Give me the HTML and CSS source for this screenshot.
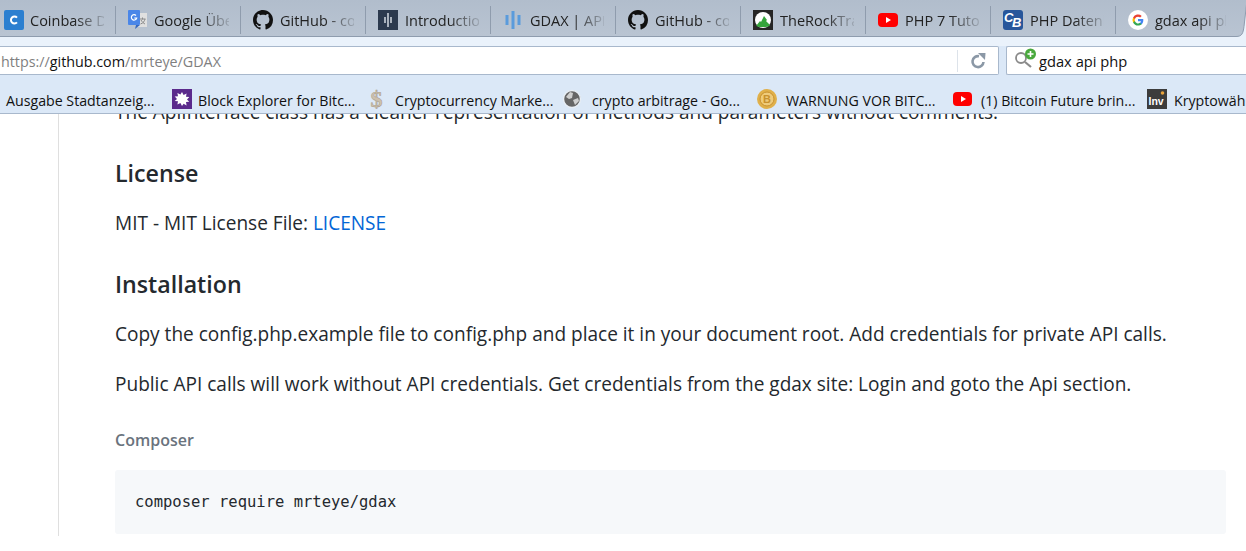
FILE: index.html
```html
<!DOCTYPE html>
<html lang="de">
<head>
<meta charset="utf-8">
<title>GDAX</title>
<link rel="stylesheet" href="styles.css">
</head>
<body>
<header class="chrome">
  <div class="tabs">
    <div class="tab first"><svg class="ic" viewBox="0 0 20 20"><rect width="20" height="20" rx="2" fill="#2b7fd0"/><path d="M13 7.600A3.500 3.500 0 1 0 13 12.400" fill="none" stroke="#fff" stroke-width="2"/></svg><span class="tt">Coinbase Dashboard</span></div>
    <div class="tab t-gt"><svg class="ic" viewBox="0 0 20 20"><rect x="8" y="3" width="11" height="14" fill="#e0e0e0"/><rect width="12" height="15" rx="1" fill="#4a86e8"/><path d="M8 15l-1 4 5-4z" fill="#3367c0"/><path d="M11.500 9h6M14.500 7.500v2M12.500 14c3-1 4-3 4.500-5M13 10c1 2 3 3.500 4 4" stroke="#8a8a8a" fill="none"/><path d="M8 5.500A2.700 2.700 0 1 0 8.700 8H6.200" fill="none" stroke="#fff" stroke-width="1.200"/></svg><span class="tt">Google Übersetzer</span></div>
    <div class="tab"><svg class="ic" viewBox="0 0 16 16"><path fill="#111" d="M8 0C3.58 0 0 3.58 0 8c0 3.54 2.29 6.53 5.47 7.59.4.07.55-.17.55-.38 0-.19-.01-.82-.01-1.49-2.01.37-2.53-.49-2.69-.94-.09-.23-.48-.94-.82-1.13-.28-.15-.68-.52-.01-.53.63-.01 1.08.58 1.23.82.72 1.21 1.87.87 2.33.66.07-.52.28-.87.51-1.07-1.78-.2-3.64-.89-3.64-3.95 0-.87.31-1.59.82-2.15-.08-.2-.36-1.02.08-2.12 0 0 .67-.21 2.2.82.64-.18 1.32-.27 2-.27s1.36.09 2 .27c1.53-1.04 2.2-.82 2.2-.82.44 1.1.16 1.92.08 2.12.51.56.82 1.27.82 2.15 0 3.07-1.87 3.75-3.65 3.95.29.25.54.73.54 1.48 0 1.07-.01 1.93-.01 2.2 0 .21.15.46.55.38A8 8 0 0 0 16 8c0-4.42-3.58-8-8-8z"/></svg><span class="tt">GitHub - coinbase</span></div>
    <div class="tab"><svg class="ic" viewBox="0 0 20 20"><rect width="20" height="20" fill="#2c3a4e"/><path d="M7 7v6M10 3v14M13 7v6" stroke="#dfe5ec" stroke-width="1.400"/></svg><span class="tt">Introduction</span></div>
    <div class="tab"><svg class="ic" viewBox="0 0 20 20"><path d="M4 5v10M10 1v18M16 5v10" stroke="#5a9bdc" stroke-width="3"/></svg><span class="tt">GDAX | API Reference</span></div>
    <div class="tab"><svg class="ic" viewBox="0 0 16 16"><path fill="#111" d="M8 0C3.58 0 0 3.58 0 8c0 3.54 2.29 6.53 5.47 7.59.4.07.55-.17.55-.38 0-.19-.01-.82-.01-1.49-2.01.37-2.53-.49-2.69-.94-.09-.23-.48-.94-.82-1.13-.28-.15-.68-.52-.01-.53.63-.01 1.08.58 1.23.82.72 1.21 1.87.87 2.33.66.07-.52.28-.87.51-1.07-1.78-.2-3.64-.89-3.64-3.95 0-.87.31-1.59.82-2.15-.08-.2-.36-1.02.08-2.12 0 0 .67-.21 2.2.82.64-.18 1.32-.27 2-.27s1.36.09 2 .27c1.53-1.04 2.2-.82 2.2-.82.44 1.1.16 1.92.08 2.12.51.56.82 1.27.82 2.15 0 3.07-1.87 3.75-3.65 3.95.29.25.54.73.54 1.48 0 1.07-.01 1.93-.01 2.2 0 .21.15.46.55.38A8 8 0 0 0 16 8c0-4.42-3.58-8-8-8z"/></svg><span class="tt">GitHub - coinbase</span></div>
    <div class="tab"><svg class="ic" viewBox="0 0 20 20"><rect width="20" height="20" fill="#262626"/><circle cx="10" cy="10" r="8" fill="#fff"/><path d="M3 16l4-5 1 1 3-6 3 4-1 1 3 3 1 2-4 1H6z" fill="#35a43c"/><path d="M0 20v-5l3 1 3 2 8 0 3-2 3-1v5z" fill="#262626"/></svg><span class="tt">TheRockTrading</span></div>
    <div class="tab"><svg class="ic" viewBox="0 0 20 20"><rect y="3" width="20" height="14" rx="4" fill="#f00"/><path d="M8 7l5 3-5 3z" fill="#fff"/></svg><span class="tt">PHP 7 Tutorial</span></div>
    <div class="tab"><svg class="ic" viewBox="0 0 20 20"><rect width="20" height="20" rx="3" fill="#27569b"/><text x="1" y="12" class="cb">C</text><text x="9" y="17" class="cb">B</text></svg><span class="tt">PHP Datenbank</span></div>
    <div class="tab active"><svg class="ic" viewBox="0 0 20 20"><circle cx="10" cy="10" r="10" fill="#fff"/><path d="M15.300 10.200c0-.4 0-.8-.1-1.200H10v2.200h3a2.600 2.600 0 0 1-1.100 1.700v1.400h1.800c1-1 1.600-2.400 1.600-4.100z" fill="#4285f4"/><path d="M10 15.500c1.500 0 2.700-.5 3.700-1.300l-1.800-1.400a3.300 3.300 0 0 1-5-1.800H5.100v1.400A5.500 5.500 0 0 0 10 15.500z" fill="#34a853"/><path d="M6.900 11a3.300 3.300 0 0 1 0-2V7.600H5.100a5.500 5.500 0 0 0 0 4.800z" fill="#fbbc05"/><path d="M10 6.700c.8 0 1.500.3 2.100.8l1.600-1.600A5.500 5.500 0 0 0 5.100 7.600L6.900 9A3.300 3.300 0 0 1 10 6.700z" fill="#ea4335"/></svg><span class="tt">gdax api php</span></div>
    <svg class="tabcurve" viewBox="0 0 12 37"><path d="M0 36.500c6 0 7-3 8-10l3-26.500h1v37H0z" fill="#eaf2fb"/><path d="M0 36.500c6 0 7-3 8-10l3-26.500" fill="none" stroke="#8e9cae"/></svg>
  </div>
  <div class="navbar">
    <div class="url">
      <span class="addr"><span class="dim">https://</span>github.com<span class="dim">/mrteye/GDAX</span></span>
      <span class="reload"><svg class="ic-reload" viewBox="0 0 16 16"><path d="M13.500 9A5.500 5.500 0 1 1 9 3.200" fill="none" stroke="#8b98a6" stroke-width="2.600"/><path d="M8 0l7.500 0-.5 7z" fill="#8b98a6"/></svg></span>
    </div>
    <div class="search">
      <svg class="ic-search" viewBox="0 0 24 20"><circle cx="7" cy="10" r="5" fill="none" stroke="#8a8a8a" stroke-width="1.800"/><path d="M11 14l6 5" stroke="#8a8a8a" stroke-width="2.200"/><circle cx="16.500" cy="6" r="5.500" fill="#49a93d"/><path d="M16.500 3v6M13.500 6h6" stroke="#fff" stroke-width="1.600"/></svg>
      <span>gdax api php</span>
    </div>
  </div>
  <nav class="bookmarks">
    <span class="bm">Ausgabe Stadtanzeig...</span>
    <svg class="bi" viewBox="0 0 20 20"><rect width="20" height="20" fill="#5b2a8c"/><path d="M10 3l1.600 3 3-1.600-.6 3.300 3.300.3-2.300 2.400 2.300 2.400-3.300.3.600 3.300-3-1.600L10 17l-1.600-3-3 1.600.6-3.300-3.300-.3L5 10 2.700 7.600 6 7.300 5.400 4 8.400 5.600z" fill="#fff"/></svg>
    <span class="bm">Block Explorer for Bitc...</span>
    <svg class="bi" viewBox="0 0 20 20"><text x="8.500" y="17.500" class="dollar">$</text></svg>
    <span class="bm">Cryptocurrency Marke...</span>
    <svg class="bi" viewBox="0 0 20 20"><circle cx="9" cy="10" r="8.500" fill="#666" stroke="#e8eef5" stroke-width="1.400"/><path d="M3 8l4-5 3 1-1 5-3 1zM10 11l5-2 1 3-4 4z" fill="#cfcfcf"/></svg>
    <span class="bm">crypto arbitrage - Go...</span>
    <svg class="bi" viewBox="0 0 20 20"><circle cx="10" cy="10" r="10" fill="#e0b04a"/><circle cx="10" cy="10" r="7" fill="#efcb7a" stroke="#c8922e"/><text x="10" y="14" class="btc">B</text></svg>
    <span class="bm">WARNUNG VOR BITC...</span>
    <svg class="bi" viewBox="0 0 20 20"><rect y="3" width="19" height="14" rx="4" fill="#f00"/><path d="M8 7l5 3-5 3z" fill="#fff"/></svg>
    <span class="bm">(1) Bitcoin Future brin...</span>
    <svg class="bi" viewBox="0 0 20 20"><rect width="20" height="20" fill="#3c3c3c"/><text x="1.500" y="16" class="inv">Inv</text><circle cx="15.500" cy="4" r="1.800" fill="#e8a33c"/></svg>
    <span class="bm">Kryptowährungen</span>
  </nav>
</header>
<main class="page">
  <article class="readme">
    <p class="clipped">The ApiInterface class has a cleaner representation of methods and parameters without comments.</p>
    <h2 class="h-license">License</h2>
    <p>MIT - MIT License File: <a href="#">LICENSE</a></p>
    <h2 class="h-install">Installation</h2>
    <p>Copy the config.php.example file to config.php and place it in your document root. Add credentials for private API calls.</p>
    <p>Public API calls will work without API credentials. Get credentials from the gdax site: Login and goto the Api section.</p>
    <h4>Composer</h4>
    <pre>composer require mrteye/gdax</pre>
  </article>
</main>
</body>
</html>
```
FILE: styles.css
```css
* { box-sizing: border-box; }
html, body { margin: 0; height: 551px; overflow: hidden; background: #fff; }
body { font-family: "Open Sans", "Liberation Sans", sans-serif; color: #24292e; }

.chrome { position: relative; z-index: 2; height: 114px; overflow: hidden; }
.tabs {
  display: flex; height: 37px;
  background: linear-gradient(#b1bdcc, #b9c4d2);
  border-bottom: 1px solid #8e9cae;
}
.tab {
  width: 125px; height: 28px; margin-top: 6px; padding: 0 11px 0 12px;
  display: flex; align-items: center; gap: 7px;
  border-right: 1px solid #8f9cad;
  font-size: 14.500px; color: #222; white-space: nowrap;
}
.tab.first { width: 116px; padding-left: 4px; gap: 6px; }
.tab.t-gt { gap: 6px; }
.tab.active { border-right: 0; width: 121px; }
.ic { width: 20px; height: 20px; flex: none; }
.tt {
  flex: 1; overflow: hidden; min-width: 0;
  -webkit-mask-image: linear-gradient(to right, #000 60%, rgba(0,0,0,.15) 100%);
  mask-image: linear-gradient(to right, #000 60%, rgba(0,0,0,.15) 100%);
}
.cb { font: italic 700 13px "Liberation Sans", sans-serif; fill: #fff; }
.tabcurve { width: 12px; height: 37px; flex: none; margin-left: -1px; }

.navbar {
  height: 38px; display: flex; gap: 7px;
  padding-top: 9px;
  background: linear-gradient(#eaf2fb 0, #eaf2fb 9px, #dbe8f7 9px);
  align-items: flex-start;
}
.url, .search {
  height: 29px; background: #fff;
  border: 1px solid #a8b8cc; border-radius: 2px;
  display: flex; align-items: center;
}
.url { width: 999px; border-left: 0; border-radius: 0 2px 2px 0; padding: 1px 0 0 1px; justify-content: space-between; font-size: 14.300px; }
.addr { color: #111; }
.dim { color: #7f7f7f; }
.reload { width: 41px; height: 22px; border-left: 1px solid #dde3ea; display: flex; align-items: center; justify-content: center; }
.ic-reload { width: 16px; height: 16px; }
.search { flex: 1; border-right: 0; border-radius: 2px 0 0 2px; padding: 1px 0 0 7px; gap: 1px; color: #111; font-size: 14.700px; }
.ic-search { width: 24px; height: 20px; margin-top: -6px; }

.bookmarks {
  height: 39px;
  display: grid;
  grid-template-columns: 166px 26px 170px 27px 168px 29px 165px 29px 167px 28px 166px 27px 1fr;
  align-items: center; padding: 12px 0 0 6px;
  background: #dbe8f7; border-bottom: 1px solid #a8b8cc;
  white-space: nowrap; font-size: 14.200px; color: #111; overflow: hidden;
}
.bm { min-width: 0; }
.bi { width: 20px; height: 20px; margin-top: -2px; }
.dollar { font: 700 24px "Liberation Serif", serif; fill: #cdc1ae; stroke: #a89a86; stroke-width: .5; text-anchor: middle; }
.btc { font: 700 11px "Liberation Sans", sans-serif; fill: #c8922e; text-anchor: middle; }
.inv { font: 700 10.500px "Liberation Sans", sans-serif; fill: #fff; }

.page { height: 437px; overflow: hidden; }
.readme {
  margin-left: 58px; height: 437px;
  border-left: 1px solid #dfdfdf;
  padding: 0 20px 0 56px;
  font-size: 19.060px; line-height: 26px;
}
.readme p { margin: 0 0 24px; white-space: nowrap; }
.readme .clipped { margin: -15px 0 0; }
.readme a { color: #0366d6; text-decoration: none; }
.readme h2 { font-size: 23.200px; font-weight: 600; line-height: 30px; margin: 0; }
.h-license { padding-top: 33px; padding-bottom: 22px; }
.h-install { padding-top: 9px; padding-bottom: 22px; }
.readme h4 { margin: 0; font-size: 16px; font-weight: 600; color: #6a737d; line-height: 20px; padding-top: 9px; }
.readme pre {
  margin: 20px 0 0; height: 64px; padding: 0 20px;
  background: #f6f8fa; border-radius: 3px;
  font: 15.500px/65px "DejaVu Sans Mono", monospace; color: #24292e;
}
```
